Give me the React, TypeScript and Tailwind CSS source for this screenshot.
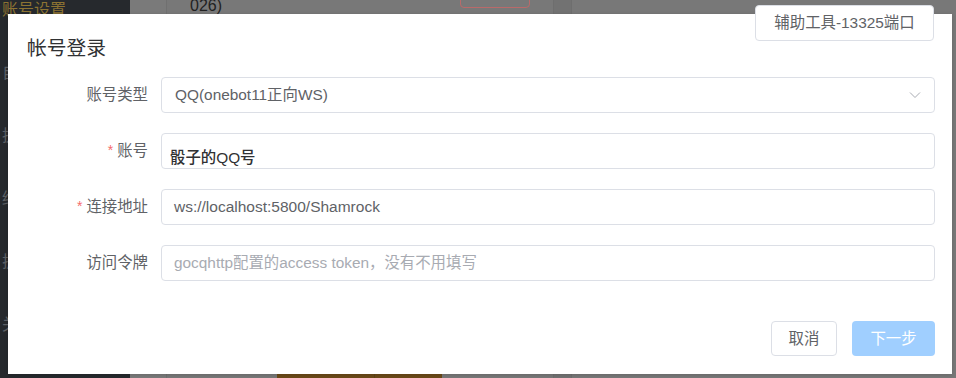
import React from "react";

const FONT = '"Liberation Sans", "Noto Sans CJK SC", sans-serif';

function Chevron() {
  return (
    <svg width="12" height="8" viewBox="0 0 12 8" fill="none">
      <path d="M1 1.5 L6 6.5 L11 1.5" stroke="#a8abb2" strokeWidth="1" />
    </svg>
  );
}

function Row({
  label,
  required,
  children,
}: {
  label: string;
  required?: boolean;
  children: React.ReactNode;
}) {
  return (
    <div className="flex items-center h-[35.5px]">
      <div className="w-[153px] pr-[13px] flex justify-end items-center text-[15.4px] text-[#606266]">
        {required && <span className="text-[#f56c6c] mr-[4px] text-[14px]">*</span>}
        <span>{label}</span>
      </div>
      <div className="flex-1 h-full">{children}</div>
    </div>
  );
}

export default function App() {
  return (
    <div
      className="relative w-[956px] h-[378px] overflow-hidden bg-[#787878]"
      style={{ fontFamily: FONT }}
    >
      {/* underlying page (dimmed) */}
      <div className="flex h-full">
        <div className="w-[130px] bg-[#26292d] flex flex-col">
          <div className="mt-[-22px] flex flex-col">
            <div className="h-[63px] flex items-center pl-[2px] text-[16px] text-[#8c7332]">账号设置</div>
            <div className="h-[63px] flex items-center pl-[2px] text-[16px] text-[#5e6166]">自定义</div>
            <div className="h-[63px] flex items-center pl-[2px] text-[16px] text-[#5e6166]">执行</div>
            <div className="h-[63px] flex items-center pl-[2px] text-[16px] text-[#5e6166]">终端</div>
            <div className="h-[63px] flex items-center pl-[2px] text-[16px] text-[#5e6166]">扩展</div>
            <div className="h-[63px] flex items-center pl-[2px] text-[16px] text-[#5e6166]">关于</div>
          </div>
        </div>
        <div className="w-[37px] bg-[#7a7a7a] border-r border-[#707070]" />
        <div className="w-[386px] flex flex-col bg-[#787878]">
          <div className="flex h-[14px] items-start">
            <span className="pl-[23px] text-[16px] leading-[16px] mt-[-2px] text-[#222]">026)</span>
            <div className="ml-[238px] w-[70px] h-[20px] mt-[-12px] border border-[#b96a6a] rounded-[4px]" />
          </div>
          <div className="mt-auto flex h-[4px]">
            <div className="w-[110px]" />
            <div className="w-[98px] bg-[#6b4a18] border-r border-[#5e4216]" />
            <div className="w-[67px] bg-[#6b4a18]" />
          </div>
        </div>
        <div className="w-[19px] bg-[#727272] border-x border-[#6e6e6e]" />
        <div className="flex-1 bg-[#787878]" />
      </div>

      {/* dialog */}
      <div className="absolute left-[8px] top-[14px] w-[944px] h-[360px] bg-white flex flex-col shadow-[0_1px_4px_rgba(0,0,0,0.15)]">
        <div className="pl-[19px] pt-[22px] text-[19.8px] leading-[24px] text-[#303133]">帐号登录</div>
        <div className="mt-[17px] pr-[17px] flex flex-col gap-[20.5px]">
          <Row label="账号类型">
            <div className="h-full border border-[#dcdfe6] rounded-[4px] flex items-center pl-[13px] pr-[13px] text-[15.4px] text-[#606266]">
              <span className="flex-1">QQ(onebot11正向WS)</span>
              <Chevron />
            </div>
          </Row>
          <Row label="账号" required>
            <div className="h-full border border-[#dcdfe6] rounded-[4px] flex items-center pl-[8px] pt-[13px] text-[15.4px] text-[#303133] font-medium">
              骰子的QQ号
            </div>
          </Row>
          <Row label="连接地址" required>
            <div className="h-full border border-[#dcdfe6] rounded-[4px] flex items-center pl-[12px] text-[15.5px] text-[#606266]">
              ws://localhost:5800/Shamrock
            </div>
          </Row>
          <Row label="访问令牌">
            <div className="h-full border border-[#dcdfe6] rounded-[4px] flex items-center pl-[12px] text-[15.4px] text-[#a8abb2]">
              gocqhttp配置的access token，没有不用填写
            </div>
          </Row>
        </div>
        <div className="mt-auto pb-[18px] pr-[17px] flex justify-end gap-[15px]">
          <button className="w-[66px] h-[35.5px] border border-[#dcdfe6] rounded-[4px] bg-white text-[15.4px] text-[#606266]">
            取消
          </button>
          <button className="w-[83px] h-[35.5px] rounded-[4px] bg-[#a0cfff] text-[15.4px] text-white">
            下一步
          </button>
        </div>
      </div>

      {/* helper tool button over overlay */}
      <div className="absolute left-[755px] top-[5px] w-[179px] h-[35.5px] bg-white border border-[#dcdfe6] rounded-[4px] flex items-center justify-center text-[15.4px] text-[#606266]">
        辅助工具-13325端口
      </div>
    </div>
  );
}
